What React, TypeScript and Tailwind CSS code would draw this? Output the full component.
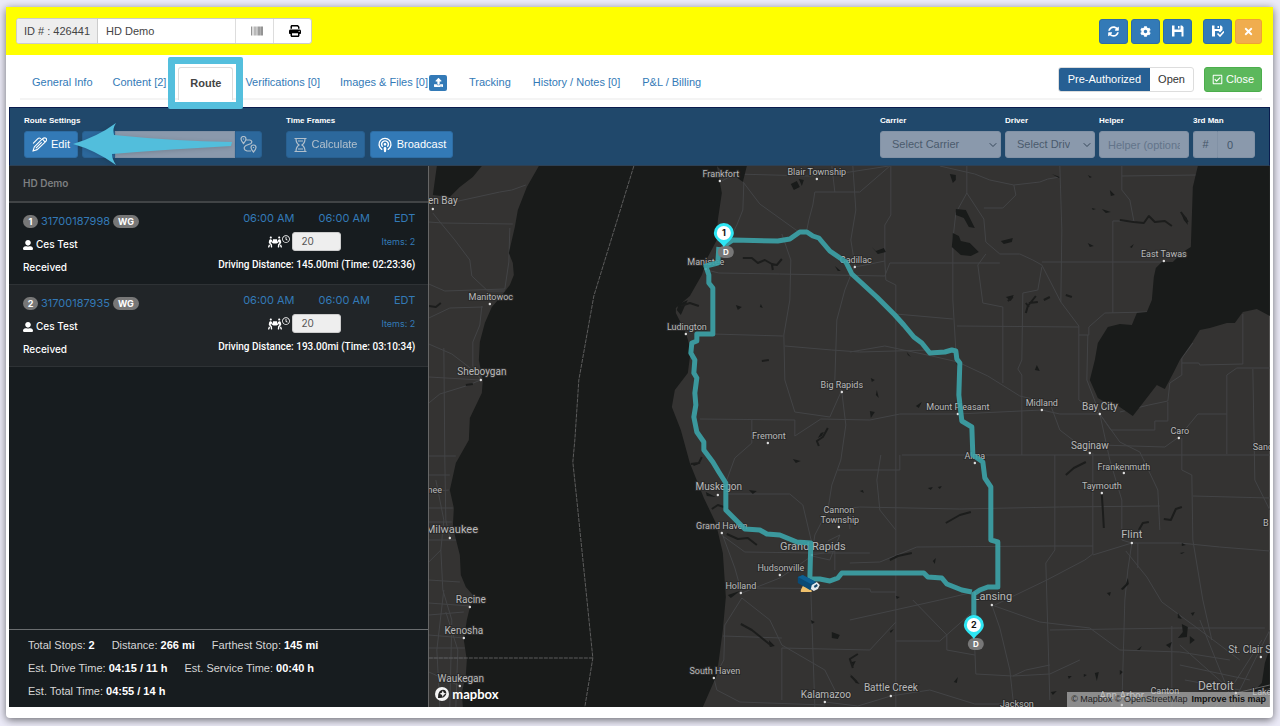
import type { ReactNode } from 'react';
import { FaBarcode, FaCog, FaPeopleCarry, FaRegCheckSquare, FaRegClock, FaSyncAlt, FaTimes, FaUpload, FaUserAlt } from 'react-icons/fa';
import { FaPrint } from 'react-icons/fa6';
import { ChevronDown, Podcast } from 'lucide-react';

const stops = [
  { n: 1, order: '31700187998', miles: '145.00mi', time: '02:23:36', bg: 'bg-[#171c1f]' },
  { n: 2, order: '31700187935', miles: '193.00mi', time: '03:10:34', bg: 'bg-[#212528]' },
];

const totals = [
  [['Total Stops:', '2'], ['Distance:', '266 mi'], ['Farthest Stop:', '145 mi']],
  [['Est. Drive Time:', '04:15 / 11 h'], ['Est. Service Time:', '00:40 h']],
  [['Est. Total Time:', '04:55 / 14 h']],
];

// name, centre x, baseline y, size
const labels: [string, number, number, number][] = [
  ['Frankfort', 721, 177, 9], ['Blair Township', 817, 175, 9], ['en Bay', 443, 204, 10], ['Manitowoc', 491, 300, 9],
  ['Sheboygan', 482, 375, 10], ['Milwaukee', 452, 533, 11], ['Racine', 471, 603, 10], ['Kenosha', 464, 634, 10],
  ['Waukegan', 461, 682, 10], ['nee', 435, 493, 9], ['Ludington', 687, 330, 9], ['Manistee', 706, 265, 9],
  ['Cadillac', 856, 263, 9], ['East Tawas', 1164, 257, 9], ['Big Rapids', 842, 388, 9], ['Mount Pleasant', 958, 410, 9],
  ['Midland', 1042, 406, 9], ['Bay City', 1100, 410, 10], ['Caro', 1180, 434, 9], ['Saginaw', 1090, 449, 10],
  ['Frankenmuth', 1124, 470, 9], ['Taymouth', 1102, 489, 9], ['Fremont', 769, 439, 9], ['Muskegon', 719, 490, 10],
  ['Grand Haven', 722, 529, 9], ['Cannon', 839, 513, 9], ['Township', 840, 523, 9], ['Grand Rapids', 813, 550, 11],
  ['Hudsonville', 781, 571, 9], ['Holland', 741, 589, 9], ['Alma', 975, 459, 9], ['Lansing', 993, 600, 11],
  ['Flint', 1132, 538, 11], ['South Haven', 715, 674, 9], ['Kalamazoo', 826, 698, 10], ['Battle Creek', 891, 691, 10],
  ['Jackson', 1017, 707, 9], ['Ann Arbor', 1122, 699, 10], ['Canton', 1165, 694, 9], ['Detroit', 1216, 690, 12],
  ['St. Clair S', 1250, 653, 10], ['Lake', 1262, 695, 9], ['Sand', 1263, 450, 9], ['B', 1266, 526, 9],
];

const towns = [
  [720, 181], [817, 179], [433, 209], [490, 304], [481, 380], [450, 538], [470, 607], [464, 638], [460, 686], [686, 334],
  [706, 269], [855, 267], [1164, 261], [842, 392], [958, 414], [1042, 410], [1100, 414], [1179, 438], [1090, 453],
  [1124, 473], [1102, 493], [768, 443], [718, 495], [722, 533], [839, 527], [812, 555], [780, 575], [741, 593],
  [975, 463], [992, 605], [1132, 543], [714, 678], [825, 702], [891, 696], [1122, 705], [1236, 693], [1261, 657],
];

const roads = [
  'M429 222 443 223 513 224', 'M433 213 441 223 455 240 470 260 472 276 488 291 505 291', 'M445 204 500 192 512 190 526 185',
  'M429 284 445 291 505 289 509 262 510 228', 'M429 318 450 308 483 307', 'M482 306 480 325 473 342 473 366 481 380 466 386 440 394 429 403',
  'M429 344 452 354 473 370', 'M429 377 481 380', 'M444 348 445 460 446 520 450 538', 'M429 456 456 456', 'M429 475 450 475', 'M429 492 449 490',
  'M429 508 453 508', 'M429 522 452 522', 'M429 540 458 540', 'M429 562 441 550 444 520 436 480', 'M441 550 443 590 452 620 450 707',
  'M429 603 470 606', 'M429 615 464 612', 'M429 635 464 638', 'M429 648 465 648', 'M429 658 466 658', 'M444 590 437 650 440 707', 'M429 672 460 686',
  'M446 612 458 650 456 707', 'M429 580 460 582', 'M722 181 735 174 744 183 743 210 737 225 728 243', 'M744 183 760 204 799 232', 'M736 174 810 176 850 172 889 166',
  'M807 230 809 220 813 205 815 192 860 192 890 166', 'M832 166 835 192', 'M707 270 719 273 780 274 885 276 890 263 1000 263', 'M782 234 791 260 790 300 784 335 785 380 795 412 830 417 842 390',
  'M713 334 783 336', 'M785 346 832 350 860 352 930 350', 'M853 166 856 210 851 240 855 265 845 290 837 320 835 380 842 392', 'M855 267 885 261 886 280 896 285 896 707', 'M891 166 891 215 885 225 885 261',
  'M700 419 795 420 795 436 821 419 870 420 900 414 958 414', 'M752 420 752 443 735 458 727 480', 'M726 494 790 494 803 505 812 543', 'M842 392 846 425 841 460 832 485 828 510 815 535 812 555',
  'M958 414 1042 410 1060 414 1100 414', 'M967 166 967 193 984 219 986 242 1000 254 1020 254 1033 260 1042 265 1061 302 1079 326 1079 400 1100 414', 'M967 193 956 213 953 240 953 300 956 350',
  'M986 254 978 265 983 303 1003 307 1003 383', 'M984 208 1003 208 1016 195 1014 185 990 180 975 174 940 166', 'M1014 185 1040 182 1048 179 1060 177', 'M1060 166 1062 230 1061 302', 'M1042 262 1164 262', 'M1113 313 1113 221 1134 221 1130 200 1122 190 1122 166',
  'M1122 176 1197 175', 'M1042 267 1038 290 1023 293 1022 360 1018 369 1022 375 1022 455', 'M957 326 1079 327', 'M1079 335 1089 335 1089 327 1105 313 1148 312', 'M1088 335 1087 380 1100 414 1120 442 1140 452 1158 490 1160 530',
  'M850 352 885 346 932 356 958 362 988 376 1020 396 1050 403 1060 430 1090 453', 'M896 314 953 319', 'M1193 343 1182 358 1182 375 1170 383 1168 401 1149 405 1120 412', 'M1182 363 1199 363 1200 365 1243 364 1243 314',
  'M1270 368 1237 368 1227 375 1227 454', 'M1227 414 1198 414 1179 437 1165 447 1100 445', 'M1168 402 1168 421 1155 421 1155 430 1111 430 1100 414', 'M1182 438 1182 470 1192 475 1193 540 1203 600 1212 640', 'M902 455 1270 455', 'M1193 496 1270 498',
  'M1253 369 1255 480 1270 510', 'M850 529 850 508 860 507 960 509 1060 507 1160 506', 'M850 563 880 562 917 547 1055 546 1093 546', 'M1093 453 1093 554 1085 560 1047 580 995 605', 'M1100 414 1110 460 1122 500 1122 540 1132 543',
  'M1132 543 1128 570 1125 600 1122 707', 'M1132 543 1180 543 1220 547 1270 551', 'M1126 551 1147 577 1162 602 1200 630 1240 660', 'M1132 543 1093 555', 'M1138 543 1138 568', 'M1055 455 1055 550 1046 563 1050 700',
  'M992 605 1040 622 1090 628 1120 650 1180 652 1230 660', 'M992 605 1000 628 1010 670 1014 707', 'M850 620 940 600 974 592', 'M913 600 947 635 947 650 975 655', 'M896 641 940 641 975 610', 'M975 650 976 674 1013 676 1050 674 1080 660',
  'M1013 676 1026 670 1050 665', 'M1050 630 1180 628 1265 628', 'M1172 626 1172 707', 'M1180 645 1250 707', 'M1200 620 1235 707', 'M1262 640 1230 690 1215 707', 'M1270 630 1235 700', 'M1180 665 1250 680',
  'M1185 680 1240 690', 'M723 536 745 552 812 553 870 553', 'M722 533 735 568 742 593 780 578 812 556', 'M742 598 770 620 782 645 825 670 840 700', 'M742 598 725 625 724 660 714 678 717 690 740 702 825 705',
  'M723 636 782 638', 'M754 588 870 589 871 592 896 592', 'M811 590 815 707', 'M782 648 870 650 896 622', 'M782 700 782 648', 'M825 702 858 706 891 696 930 690 975 704 1017 704', 'M838 470 900 470 900 455', 'M881 455 877 480 880 510 896 530',
  'M828 541 840 535 830 560 812 556', 'M812 555 835 551 835 570',
];

const lakes = [
  'M717 166h30l-4 16-8-6-10-2z', 'M791 184l6-3 3 6-6 3zM799 179l5 1-2 6z', 'M956 209l10 1 4 8 5 10-6-1-5-9-8-3z', 'M953 233l6 3 2 5 9 2 9 9-8 4-10-1-9-8z', 'M872 247l4 4 8-3 2 4-8 2z', 'M950 174l6 1v5l-3 3z', 'M1001 241l12-3-1 4-8 2z', 'M1110 190l5 5-4 1z',
  'M1181 212l6 6 1 7-4-5z', 'M841 271l-6-5 3 5z', 'M688 300l-9 4-2 6 4 5 4-9z', 'M736 305l6 2-4 3z', 'M761 304l2 4-3-1z',
  'M693 464l8-1-7 3z', 'M706 492l10 5-9-1z', 'M749 490l8 1-4 3z', 'M793 459l8 2-5 2z', 'M821 433l3-1-2 4-4 2z', 'M740 591l-12 4 3 3z', 'M832 632l8 3-2 4-6-1z', 'M769 640l6 6-5 1z', 'M811 620l4 2-3 2z', 'M852 662l4-1-3 6z',
  'M850 674l10 10-4-1z', 'M1006 297l8-2-3 6z', 'M1037 365l3 6-5-1z', 'M916 406l6-4-3 6z', 'M871 378l4 2-3 2z', 'M877 390l2 8-3-3z', 'M870 411l5 1-4 6z', 'M1088 175l4 2-2 1z', 'M1052 174l8 3-1 1z', 'M1092 208l4 1-3 1zM1102 209l9 3-5 1z', 'M1088 243l6 3-4 1z', 'M1130 247l4-3-2 4z',
  'M928 488l5-1-2 3z', 'M938 487l4-1-2 3z', 'M860 491l3-1 1 3z', 'M1128 578l1 6-6 6-2-1 5-5z', 'M1107 593l4-1-1 4z', 'M1182 624l6 3-1 10-9 1 5-6z', 'M1190 636l5 4-5 4z', 'M1166 645l6-3-2 6z', 'M1178 613l4 6-4-1z', 'M1191 613l4-1-2 4z',
  'M1137 650l5-4-2 4z', 'M1095 673l4-1-2 9z', 'M1084 674l3 1-3 2z', 'M1068 676l4 0-3 3z', 'M1120 670l3 2-3 3z', 'M954 682l4-5-1 6z', 'M896 596l4 1-3 2z', 'M890 631l4-2-3 4z', 'M1051 692l6-1-4 4z', 'M933 561l3-3-1 6z', 'M1182 543l4 2-4 1z', 'M1180 553l5-1-3 2z', 'M1015 560l1 4z', 'M958 367l-2-5 2 1z', 'M907 352l4 5-3-2z',
];

const rivers = [
  'M743 258 752 258 758 263 765 260 772 264 777 265 782 259M772 264 773 270', 'M681 306 690 303 699 306', 'M1120 220 1134 222 1144 223 1149 216 1155 222 1165 221 1172 226', 'M1026 313 1028 306 1036 296M1029 303 1038 302M1026 303 1029 307',
  'M819 446 817 441 823 437 828 428', 'M1066 475 1074 468 1086 462', 'M1164 519 1171 520 1176 509 1182 507', 'M1139 530 1143 523 1149 522', 'M727 534 738 539 748 538 757 545', 'M741 624 752 630 762 638 772 646', 'M712 509 718 505 724 507',
  'M691 464 699 463 702 457', 'M851 676 857 682', 'M853 668 850 659 858 654', 'M1044 300 1050 297', 'M762 361 769 360', 'M890 560 898 556 912 553', 'M946 523 960 515 971 512', 'M1102 495 1103 510 1104 528', 'M1181 212 1188 222',
  'M429 306 436 307 441 303', 'M466 385 473 384', 'M1013 297 1008 301', 'M1066 295 1072 297',
];

const west =
  'M719 247 718 263 706 266 709 275 709 283 713 288 713 334 697 334 697 341 692 343 691 353 695 360 694 373 697 378 695 393 696 405 694 417 697 432 704 442 704 450 713 462 719 472 726 483 726 510 745 529 760 530 767 534 780 535 797 542 811 543 810 579 820 579 830 581 838 578 842 573 924 573 928 577 942 578 947 584 962 590 972 592';
const east =
  'M724 246 733 240 778 241 790 239 800 232 807 232 813 236 819 238 830 251 846 262 852 274 877 297 895 315 904 325 914 337 922 343 930 353 945 352 952 350 956 351 957 359 960 363 959 395 962 421 972 427 973 455 983 462 985 478 991 487 991 540 998 542 998 587 988 587 980 590 974 594 974 620';

function Pin({ x, y, n }: { x: number; y: number; n: number }) {
  return (
    <g fontFamily="Inter, sans-serif" fontWeight="700" textAnchor="middle">
      <rect x={x - 6} y={y + 13} width="16" height="12" rx="6" fill="#777" />
      <text x={x + 2} y={y + 22} fontSize="8" fill="#fff">D</text>
      <path d={`M${x} ${y + 14}C${x - 3} ${y + 9} ${x - 10} ${y + 6} ${x - 10} ${y}a10 10 0 0 1 20 0C${x + 10} ${y + 6} ${x + 3} ${y + 9} ${x} ${y + 14}z`} fill="#2ee6f4" />
      <circle cx={x} cy={y} r="7" fill="#fff" />
      <text x={x} y={y + 3} fontSize="9" fill="#111">{n}</text>
    </g>
  );
}

function RouteMap() {
  return (
    <svg viewBox="429 166 841 541" preserveAspectRatio="xMidYMid slice" className="absolute inset-0 h-full w-full" role="img" aria-label="Route map">
      <rect x="429" y="166" width="841" height="541" fill="#343332" />
      <g fill="none" stroke="#434446" strokeWidth="1">
        {roads.map((d) => <path key={d} d={d} />)}
      </g>
      <g fill="#191b1a">
        <path d="M539 166 527 187 518 210 515 227 509 253 513 263 514 275 510 285 500 298 492 307 485 323 480 342 479 360 483 380 482 393 470 418 469 440 456 463 450 490 454 508 453 527 460 555 461 575 466 587 473 595 467 620 464 640 467 660 466 675 462 693 463 707 703 707 717 675 723 630 726 597 723 553 716 523 704 498 690 463 681 430 672 407 675 390 688 373 691 350 686 333 676 313 676 308 690 296 702 275 708 257 717 240 718 220 722 193 717 166z" />
        <path d="M437 166 482 166 473 177 460 187 450 197 433 195z" />
        <path d="M1198 166 1193 187 1191 247 1183 252 1173 262 1162 262 1156 268 1154 277 1152 300 1147 312 1137 313 1132 325 1120 324 1108 327 1103 335 1098 343 1095 360 1090 380 1098 398 1110 405 1117 405 1133 416 1157 385 1165 389 1174 372 1180 360 1192 343 1200 330 1210 328 1227 323 1235 323 1243 312 1257 309 1270 316 1270 166z" />
        <path d="M1270 648 1265 663 1262 683 1253 692 1270 688z" />
        {lakes.map((d) => <path key={d} d={d} />)}
      </g>
      <g fill="none" stroke="#1c1d1c" strokeWidth="2" strokeLinejoin="round">
        {rivers.map((d) => <path key={d} d={d} />)}
      </g>
      <path d="M634 166 594 296 579 380 575 440 573 462 577 500 593 658 585 707M429 658H593" fill="none" stroke="#5c5c5c" strokeWidth="1" strokeDasharray="4 1" />
      <path d="M1236 693 1270 685" stroke="#666" />
      <g fontFamily="Roboto, sans-serif" fill="#b9b9b9" stroke="#2a2a2a" strokeWidth="2" paintOrder="stroke" textAnchor="middle">
        {labels.map(([name, x, y, size]) => <text key={name} x={x} y={y} fontSize={size}>{name}</text>)}
      </g>
      {towns.map(([x, y]) => <circle key={`${x}-${y}`} cx={x} cy={y} r="1.2" fill="#ddd" />)}
      <g fill="none" stroke="#3ca3a9" strokeOpacity="0.9" strokeWidth="5" strokeLinejoin="round">
        <path d={west} />
        <path d={east} />
      </g>
      <g>
        <path d="M801 590l2-4 8 2 1 4h-11z" fill="#efc06b" />
        <path d="M798 577l5-2 13 7-2 7-4 1-12-7z" fill="#0a4a74" />
        <path d="M798 577l5-2 13 7-5 2z" fill="#0d5f93" />
        <path d="M812 585l5-3 3 3-2 4-4 2-3-2z" fill="#e4eaee" />
        <path d="M814 586l3-2 1 2-3 2z" fill="#17496b" />
      </g>
      <Pin x={724} y={233} n={1} />
      <Pin x={974} y={625} n={2} />
    </svg>
  );
}

function SquareButton({ label, orange, children }: { label: string; orange?: boolean; children: ReactNode }) {
  return (
    <button
      aria-label={label}
      className={`flex h-[25px] items-center justify-center rounded-[3px] border text-[11px] text-white ${orange ? 'w-[27px] border-[#eea236] bg-[#f0ad4e]' : 'w-[29px] border-[#2e6da4] bg-[#337ab7]'}`}
    >
      {children}
    </button>
  );
}

function Floppy({ saved }: { saved?: boolean }) {
  return (
    <svg width="12" height="12" viewBox="0 0 12 12" fill="currentColor">
      {saved ? (
        <>
          <path d="M0 .5h2.500V4H8V.5h1L10.500 2v3L8 7.500 6.500 6H3v5.500H0z" />
          <path d="M5.500 1H7v2H5.500z" />
          <path d="M5.500 8.500 8 11l4-4.500" fill="none" stroke="currentColor" strokeWidth="1.600" />
        </>
      ) : (
        <>
          <path d="M0 .5h2.500V4.500h6V.5H10L11.500 2v9.500h-2V7h-7v4.500H0z" />
          <path d="M6 1h1.500v2.500H6z" />
        </>
      )}
    </svg>
  );
}

const tab = 'whitespace-nowrap text-[#337ab7]';
const caption = 'mb-1 block text-[8px] leading-[12px] font-bold text-white';
const field = 'h-[27px] rounded-[3px] border border-[#8191a5] bg-[#8a99ac] text-[11px]';
const primary = 'flex h-[27px] items-center rounded-[3px] border border-[#2e6da4] bg-[#337ab7] text-[11px] text-white';

function Picker({ id, label, text, width }: { id: string; label: string; text: string; width: string }) {
  return (
    <div className={width}>
      <label htmlFor={id} className={caption}>{label}</label>
      <div className="relative">
        <select id={id} disabled className={`${field} w-full appearance-none pr-6 pl-[11px] text-[#4b5b6d] opacity-100`}>
          <option>{text}</option>
        </select>
        <ChevronDown className="pointer-events-none absolute top-2 right-[2px] text-[#35475a]" size={12} strokeWidth={2} />
      </div>
    </div>
  );
}

function Stop({ stop }: { stop: (typeof stops)[number] }) {
  const id = `service-${stop.n}`;
  return (
    <li className={`flex h-[82px] items-start justify-between border-b border-[#2e3235] pr-[13px] pl-[14px] text-[10px] font-medium text-white ${stop.bg}`}>
      <div className="pt-[7px] leading-[23px]">
        <div className="flex items-center gap-[3px]">
          <span className="flex h-[13px] min-w-[15px] items-center justify-center rounded-full bg-[#777] px-1 text-[9px] font-bold">{stop.n}</span>
          <a href="#order" className="text-[11px] font-normal text-[#337ab7]">{stop.order}</a>
          <span className="flex h-[13px] items-center rounded-full bg-[#777] px-[5px] text-[9px] font-bold">WG</span>
        </div>
        <div className="flex items-center gap-[3px]"><FaUserAlt size={10} />Ces Test</div>
        <div>Received</div>
      </div>
      <div className="flex flex-col items-end pt-1 leading-[23px]">
        <div className="flex gap-[24px] text-[11px] font-normal text-[#337ab7]">
          <a href="#from">06:00 AM</a>
          <a href="#to">06:00 AM</a>
          <a href="#zone">EDT</a>
        </div>
        <div className="flex items-center">
          <label htmlFor={id} aria-label="Service minutes" className="flex items-start">
            <FaPeopleCarry size={14} />
            <FaRegClock size={8} />
          </label>
          <input id={id} defaultValue="20" className="ml-[2px] h-[19px] w-[49px] rounded-[3px] border border-[#ccc] bg-[#eee] px-2 text-[10px] font-normal text-[#555]" />
          <a href="#items" className="ml-[40px] text-[9px] font-normal text-[#337ab7]">Items: 2</a>
        </div>
        <div className="font-['Roboto',sans-serif] whitespace-nowrap">Driving Distance: {stop.miles} (Time: {stop.time})</div>
      </div>
    </li>
  );
}

export default function App() {
  return (
    <div className="flex min-h-screen flex-col bg-[#ecebf8] pt-[7px] pr-[7px] pb-2 pl-[6px] font-['Liberation_Sans',sans-serif] text-[11px]">
      <main className="flex flex-1 flex-col rounded-b-[4px] bg-white shadow-[0_2px_8px_rgba(0,0,0,0.55)]">
        <header className="flex h-12 items-center justify-between bg-[#ffff00] pr-[11px] pl-[10px]">
          <div className="flex h-[26px] overflow-hidden rounded-[3px] border border-[#ccc] bg-white text-[#444]">
            <label htmlFor="route-name" className="flex w-[81px] items-center justify-center border-r border-[#ccc] bg-[#eee] whitespace-nowrap">ID # : 426441</label>
            <input id="route-name" defaultValue="HD Demo" className="w-[137px] px-2" />
            <button aria-label="Barcode" className="flex w-[38px] items-center justify-center border-l border-[#ddd] pl-1 text-[#555]"><FaBarcode size={12} /></button>
            <button aria-label="Print" className="flex w-[38px] items-center justify-center border-l border-[#ddd] pl-1 text-black"><FaPrint size={12} /></button>
          </div>
          <div className="flex gap-[3px]">
            <SquareButton label="Refresh"><FaSyncAlt /></SquareButton>
            <SquareButton label="Settings"><FaCog /></SquareButton>
            <SquareButton label="Save"><Floppy /></SquareButton>
            <span className="w-[5px]" />
            <SquareButton label="Save and close"><Floppy saved /></SquareButton>
            <SquareButton label="Dismiss" orange><FaTimes /></SquareButton>
          </div>
        </header>

        <div className="px-[3px]">
          <div className="h-[52px] pt-3 pr-2 pl-[11px]">
            <nav className="flex h-[33px] items-center border-b-2 border-[#f4f4f4] pl-3">
              <a href="#general" className={tab}>General Info</a>
              <a href="#content" className={`${tab} ml-[20px]`}>Content [2]</a>
              <div className="relative z-10 -mb-[2px] ml-3 h-[33px] w-[55px] rounded-t-[3px] border border-b-0 border-[#ddd] bg-white">
                <a href="#route" aria-current="page" className="flex h-[31px] items-center justify-center font-bold text-[#444]">Route</a>
                <span className="pointer-events-none absolute -top-[11px] -left-[11px] h-[52px] w-[75px] rounded-[2px] border-[7px] border-[#54bfdd]" />
              </div>
              <a href="#verifications" className={`${tab} ml-3`}>Verifications [0]</a>
              <a href="#files" className={`${tab} ml-[20px]`}>Images &amp; Files [0]</a>
              <button aria-label="Upload" className="ml-[1px] flex h-4 w-[18px] items-center justify-center rounded-[2px] bg-[#337ab7] text-white"><FaUpload size={9} /></button>
              <a href="#tracking" className={`${tab} ml-[22px]`}>Tracking</a>
              <a href="#history" className={`${tab} ml-[22px]`}>History / Notes [0]</a>
              <a href="#billing" className={`${tab} ml-[22px]`}>P&amp;L / Billing</a>
              <div className="ml-auto flex h-[25px] self-start overflow-hidden rounded-[3px] border border-[#ddd]">
                <button className="bg-[#265f93] px-[9px] whitespace-nowrap text-white">Pre-Authorized</button>
                <button className="px-2 text-[#333]">Open</button>
              </div>
              <button className="ml-[10px] flex h-[25px] w-[58px] items-center justify-center gap-[3px] self-start rounded-[3px] border border-[#4cae4c] bg-[#5cb85c] text-white">
                <FaRegCheckSquare size={11} />Close
              </button>
            </nav>
          </div>

          <section className="flex h-[59px] justify-between border border-[#0a1c4e] border-b-[#2c4055] bg-[#20486b] pt-[7px] pr-[14px] pl-[14px]">
            <div className="flex gap-6">
              <div className="relative">
                <span className={caption}>Route Settings</span>
                <div className="flex">
                  <button className={`${primary} w-[54px] justify-center gap-1`}>
                    <svg width="15" height="15" viewBox="0 0 16 16" fill="none" stroke="currentColor" strokeWidth="1.200" strokeLinejoin="round" strokeLinecap="round">
                      <path d="M1 15 2.500 10.500 11 2Q13.500 0 15 1.500T14 5.500L5.500 13.500zM9 1.500Q7.500 .5 6 2L1.500 6.500M11 2 14 5.500M4.500 11.500 10 6" />
                    </svg>
                    Edit
                  </button>
                  <button disabled aria-label="Saved routes" className={`${primary} ml-1 w-[33px] rounded-r-none opacity-65`} />
                  <input disabled aria-label="Saved route" className={`${field} w-[120px] rounded-none`} />
                  <button disabled aria-label="Plan route" className={`${primary} w-[27px] justify-center rounded-l-none opacity-65`}>
                    <svg width="17" height="17" viewBox="0 0 17 17" fill="none" stroke="currentColor" strokeWidth="1.200">
                      <path d="M3.500 7.500Q1 4.500 1 3a2.500 2.500 0 0 1 5 0Q6 4.500 3.500 7.500zM13.500 16Q11 13 11 11.500a2.500 2.500 0 0 1 5 0Q16 13 13.500 16zM6 4h4q3 1 1 3.500L6 9.500q-3 2-1 4.500l2 1h4" />
                      <path d="M3.500 2.500v1M13.500 11v1" />
                    </svg>
                  </button>
                </div>
                {/* callout arrow pointing at Edit */}
                <svg className="pointer-events-none absolute top-[6px] left-[49px] z-10 drop-shadow-sm" width="160" height="46" viewBox="0 0 160 46">
                  <path d="M0 23Q24 16 43 2Q39 8 41 14Q100 20 159 21L158 25Q100 28 39 33Q39 38 43 44Q22 29 0 23z" fill="#52bedc" />
                </svg>
              </div>
              <div>
                <span className={caption}>Time Frames</span>
                <div className="flex gap-[5px]">
                  <button disabled className={`${primary} w-[79px] justify-center gap-[5px] opacity-65`}>
                    <svg width="13" height="16" viewBox="0 0 13 16" fill="none" stroke="currentColor" strokeWidth="1.200">
                      <path d="M.5 1.500h12M.5 14.500h12M2 1.500Q2 6 5 8 2 10 2 14.500M11 1.500Q11 6 8 8q3 2 3 6.500M4 4h5M4 12h5" />
                    </svg>
                    Calculate
                  </button>
                  <button className={`${primary} w-[83px] justify-center gap-1`}><Podcast size={16} strokeWidth={2} />Broadcast</button>
                </div>
              </div>
            </div>
            <div className="flex gap-[4px]">
              <Picker id="carrier" label="Carrier" text="Select Carrier" width="w-[121px]" />
              <Picker id="driver" label="Driver" text="Select Driver" width="w-[90px]" />
              <div className="w-[90px]">
                <label htmlFor="helper" className={caption}>Helper</label>
                <input id="helper" disabled placeholder="Helper (optional)" className={`${field} w-full px-2 placeholder:text-[#62748a]`} />
              </div>
              <div className="w-[62px]">
                <label htmlFor="third-man" className={caption}>3rd Man</label>
                <div className="flex">
                  <span className={`${field} flex w-6 items-center justify-center rounded-r-none border-r-0 text-[#44566a]`}>#</span>
                  <input id="third-man" disabled defaultValue="0" className={`${field} w-[38px] rounded-l-none px-[9px] text-[#44566a]`} />
                </div>
              </div>
            </div>
          </section>
        </div>

        <div className="mx-[3px] mb-[11px] flex flex-1">
          <aside className="flex w-1/3 flex-col border-r border-[#666] bg-[#171c1f]">
            <h2 className="flex h-[37px] items-center border-b-2 border-[#414446] bg-[#212528] pl-[14px] font-['Inter',sans-serif] text-[10px] font-semibold text-[#7d7f81]">HD Demo</h2>
            <ul className="flex-1 font-['Inter',sans-serif]">
              {stops.map((s) => <Stop key={s.n} stop={s} />)}
            </ul>
            <footer className="border-t border-[#6a6d6f] px-[19px] pt-1 pb-1 leading-[23px] text-[#d6d6d6]">
              {totals.map((row, i) => (
                <div key={i} className="flex gap-[17px]">
                  {row.map(([k, v]) => <span key={k}>{k} <b className="text-white">{v}</b></span>)}
                </div>
              ))}
            </footer>
          </aside>
          <section className="relative flex-1 overflow-hidden">
            <RouteMap />
            <a href="#mapbox" className="absolute bottom-[5px] left-[6px] flex items-center gap-[3px] font-['Lato',sans-serif] text-[13px] leading-4 font-bold text-white">
              <svg width="14" height="14" viewBox="0 0 14 14">
                <circle cx="7" cy="7" r="7" fill="#f4f4f4" />
                <path d="M3 11q-.5-4 1.500-6.500t5-1.500q2.500 1.500 1.500 4.500Q9.500 11.500 3 11z" fill="#222" />
                <path d="M7.800 3.500 8.800 5.700 11 6.700 8.800 7.700 7.800 9.900 6.800 7.700 4.600 6.700 6.800 5.700z" fill="#f4f4f4" />
              </svg>
              mapbox
            </a>
            <div className="absolute right-0 bottom-0 flex h-[15px] items-center gap-1 bg-[#c8c8c8]/60 px-1 text-[9px] whitespace-nowrap text-[#222]">
              <span><a href="#mapbox">© Mapbox</a> <a href="#osm">© OpenStreetMap</a></span>
              <a href="#improve" className="font-bold text-[#111]">Improve this map</a>
            </div>
          </section>
        </div>
      </main>
    </div>
  );
}
